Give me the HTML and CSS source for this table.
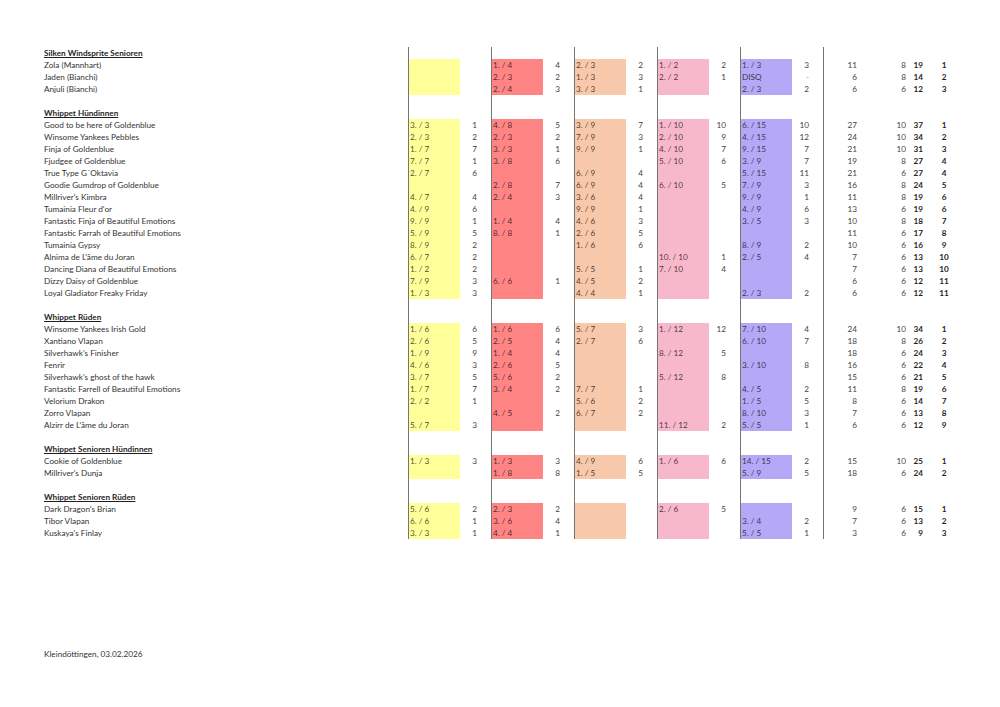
FILE: index.html
```html
<!DOCTYPE html>
<html lang="de">
<head>
<meta charset="utf-8">
<title>Rangliste</title>
<link rel="stylesheet" href="styles.css">
</head>
<body>
<div class="sheet">
  <div class="row head"><span class="nm"><u>Silken Windsprite Senioren</u></span><span class="c"></span><span class="n"></span><span class="c"></span><span class="n"></span><span class="c"></span><span class="n"></span><span class="c"></span><span class="n"></span><span class="c"></span><span class="n"></span><span class="t"></span><span class="b"></span><span class="s"></span><span class="k"></span></div>
  <div class="row"><span class="nm">Zola (Mannhart)</span><span class="c y"></span><span class="n"></span><span class="c r">1. / 4</span><span class="n">4</span><span class="c o">2. / 3</span><span class="n">2</span><span class="c p">1. / 2</span><span class="n">2</span><span class="c v">1. / 3</span><span class="n">3</span><span class="t">11</span><span class="b">8</span><span class="s">19</span><span class="k">1</span></div>
  <div class="row"><span class="nm">Jaden (Bianchi)</span><span class="c y"></span><span class="n"></span><span class="c r">2. / 3</span><span class="n">2</span><span class="c o">1. / 3</span><span class="n">3</span><span class="c p">2. / 2</span><span class="n">1</span><span class="c v">DISQ</span><span class="n dash">-</span><span class="t">6</span><span class="b">8</span><span class="s">14</span><span class="k">2</span></div>
  <div class="row"><span class="nm">Anjuli (Bianchi)</span><span class="c y"></span><span class="n"></span><span class="c r">2. / 4</span><span class="n">3</span><span class="c o">3. / 3</span><span class="n">1</span><span class="c p"></span><span class="n"></span><span class="c v">2. / 3</span><span class="n">2</span><span class="t">6</span><span class="b">6</span><span class="s">12</span><span class="k">3</span></div>
  <div class="row"><span class="nm"></span><span class="c"></span><span class="n"></span><span class="c"></span><span class="n"></span><span class="c"></span><span class="n"></span><span class="c"></span><span class="n"></span><span class="c"></span><span class="n"></span><span class="t"></span><span class="b"></span><span class="s"></span><span class="k"></span></div>

  <div class="row head"><span class="nm"><u>Whippet Hündinnen</u></span><span class="c"></span><span class="n"></span><span class="c"></span><span class="n"></span><span class="c"></span><span class="n"></span><span class="c"></span><span class="n"></span><span class="c"></span><span class="n"></span><span class="t"></span><span class="b"></span><span class="s"></span><span class="k"></span></div>
  <div class="row"><span class="nm">Good to be here of Goldenblue</span><span class="c y">3. / 3</span><span class="n">1</span><span class="c r">4. / 8</span><span class="n">5</span><span class="c o">3. / 9</span><span class="n">7</span><span class="c p">1. / 10</span><span class="n">10</span><span class="c v">6. / 15</span><span class="n">10</span><span class="t">27</span><span class="b">10</span><span class="s">37</span><span class="k">1</span></div>
  <div class="row"><span class="nm">Winsome Yankees Pebbles</span><span class="c y">2. / 3</span><span class="n">2</span><span class="c r">2. / 3</span><span class="n">2</span><span class="c o">7. / 9</span><span class="n">3</span><span class="c p">2. / 10</span><span class="n">9</span><span class="c v">4. / 15</span><span class="n">12</span><span class="t">24</span><span class="b">10</span><span class="s">34</span><span class="k">2</span></div>
  <div class="row"><span class="nm">Finja of Goldenblue</span><span class="c y">1. / 7</span><span class="n">7</span><span class="c r">3. / 3</span><span class="n">1</span><span class="c o">9. / 9</span><span class="n">1</span><span class="c p">4. / 10</span><span class="n">7</span><span class="c v">9. / 15</span><span class="n">7</span><span class="t">21</span><span class="b">10</span><span class="s">31</span><span class="k">3</span></div>
  <div class="row"><span class="nm">Fjudgee of Goldenblue</span><span class="c y">7. / 7</span><span class="n">1</span><span class="c r">3. / 8</span><span class="n">6</span><span class="c o"></span><span class="n"></span><span class="c p">5. / 10</span><span class="n">6</span><span class="c v">3. / 9</span><span class="n">7</span><span class="t">19</span><span class="b">8</span><span class="s">27</span><span class="k">4</span></div>
  <div class="row"><span class="nm">True Type G´Oktavia</span><span class="c y">2. / 7</span><span class="n">6</span><span class="c r"></span><span class="n"></span><span class="c o">6. / 9</span><span class="n">4</span><span class="c p"></span><span class="n"></span><span class="c v">5. / 15</span><span class="n">11</span><span class="t">21</span><span class="b">6</span><span class="s">27</span><span class="k">4</span></div>
  <div class="row"><span class="nm">Goodie Gumdrop of Goldenblue</span><span class="c y"></span><span class="n"></span><span class="c r">2. / 8</span><span class="n">7</span><span class="c o">6. / 9</span><span class="n">4</span><span class="c p">6. / 10</span><span class="n">5</span><span class="c v">7. / 9</span><span class="n">3</span><span class="t">16</span><span class="b">8</span><span class="s">24</span><span class="k">5</span></div>
  <div class="row"><span class="nm">Millriver's Kimbra</span><span class="c y">4. / 7</span><span class="n">4</span><span class="c r">2. / 4</span><span class="n">3</span><span class="c o">3. / 6</span><span class="n">4</span><span class="c p"></span><span class="n"></span><span class="c v">9. / 9</span><span class="n">1</span><span class="t">11</span><span class="b">8</span><span class="s">19</span><span class="k">6</span></div>
  <div class="row"><span class="nm">Tumainia Fleur d'or</span><span class="c y">4. / 9</span><span class="n">6</span><span class="c r"></span><span class="n"></span><span class="c o">9. / 9</span><span class="n">1</span><span class="c p"></span><span class="n"></span><span class="c v">4. / 9</span><span class="n">6</span><span class="t">13</span><span class="b">6</span><span class="s">19</span><span class="k">6</span></div>
  <div class="row"><span class="nm">Fantastic Finja of Beautiful Emotions</span><span class="c y">9. / 9</span><span class="n">1</span><span class="c r">1. / 4</span><span class="n">4</span><span class="c o">4. / 6</span><span class="n">3</span><span class="c p"></span><span class="n"></span><span class="c v">3. / 5</span><span class="n">3</span><span class="t">10</span><span class="b">8</span><span class="s">18</span><span class="k">7</span></div>
  <div class="row"><span class="nm">Fantastic Farrah of Beautiful Emotions</span><span class="c y">5. / 9</span><span class="n">5</span><span class="c r">8. / 8</span><span class="n">1</span><span class="c o">2. / 6</span><span class="n">5</span><span class="c p"></span><span class="n"></span><span class="c v"></span><span class="n"></span><span class="t">11</span><span class="b">6</span><span class="s">17</span><span class="k">8</span></div>
  <div class="row"><span class="nm">Tumainia Gypsy</span><span class="c y">8. / 9</span><span class="n">2</span><span class="c r"></span><span class="n"></span><span class="c o">1. / 6</span><span class="n">6</span><span class="c p"></span><span class="n"></span><span class="c v">8. / 9</span><span class="n">2</span><span class="t">10</span><span class="b">6</span><span class="s">16</span><span class="k">9</span></div>
  <div class="row"><span class="nm">Alnima de L'âme du Joran</span><span class="c y">6. / 7</span><span class="n">2</span><span class="c r"></span><span class="n"></span><span class="c o"></span><span class="n"></span><span class="c p">10. / 10</span><span class="n">1</span><span class="c v">2. / 5</span><span class="n">4</span><span class="t">7</span><span class="b">6</span><span class="s">13</span><span class="k">10</span></div>
  <div class="row"><span class="nm">Dancing Diana of Beautiful Emotions</span><span class="c y">1. / 2</span><span class="n">2</span><span class="c r"></span><span class="n"></span><span class="c o">5. / 5</span><span class="n">1</span><span class="c p">7. / 10</span><span class="n">4</span><span class="c v"></span><span class="n"></span><span class="t">7</span><span class="b">6</span><span class="s">13</span><span class="k">10</span></div>
  <div class="row"><span class="nm">Dizzy Daisy of Goldenblue</span><span class="c y">7. / 9</span><span class="n">3</span><span class="c r">6. / 6</span><span class="n">1</span><span class="c o">4. / 5</span><span class="n">2</span><span class="c p"></span><span class="n"></span><span class="c v"></span><span class="n"></span><span class="t">6</span><span class="b">6</span><span class="s">12</span><span class="k">11</span></div>
  <div class="row"><span class="nm">Loyal Gladiator Freaky Friday</span><span class="c y">1. / 3</span><span class="n">3</span><span class="c r"></span><span class="n"></span><span class="c o">4. / 4</span><span class="n">1</span><span class="c p"></span><span class="n"></span><span class="c v">2. / 3</span><span class="n">2</span><span class="t">6</span><span class="b">6</span><span class="s">12</span><span class="k">11</span></div>
  <div class="row"><span class="nm"></span><span class="c"></span><span class="n"></span><span class="c"></span><span class="n"></span><span class="c"></span><span class="n"></span><span class="c"></span><span class="n"></span><span class="c"></span><span class="n"></span><span class="t"></span><span class="b"></span><span class="s"></span><span class="k"></span></div>

  <div class="row head"><span class="nm"><u>Whippet Rüden</u></span><span class="c"></span><span class="n"></span><span class="c"></span><span class="n"></span><span class="c"></span><span class="n"></span><span class="c"></span><span class="n"></span><span class="c"></span><span class="n"></span><span class="t"></span><span class="b"></span><span class="s"></span><span class="k"></span></div>
  <div class="row"><span class="nm">Winsome Yankees Irish Gold</span><span class="c y">1. / 6</span><span class="n">6</span><span class="c r">1. / 6</span><span class="n">6</span><span class="c o">5. / 7</span><span class="n">3</span><span class="c p">1. / 12</span><span class="n">12</span><span class="c v">7. / 10</span><span class="n">4</span><span class="t">24</span><span class="b">10</span><span class="s">34</span><span class="k">1</span></div>
  <div class="row"><span class="nm">Xantiano Vlapan</span><span class="c y">2. / 6</span><span class="n">5</span><span class="c r">2. / 5</span><span class="n">4</span><span class="c o">2. / 7</span><span class="n">6</span><span class="c p"></span><span class="n"></span><span class="c v">6. / 10</span><span class="n">7</span><span class="t">18</span><span class="b">8</span><span class="s">26</span><span class="k">2</span></div>
  <div class="row"><span class="nm">Silverhawk's Finisher</span><span class="c y">1. / 9</span><span class="n">9</span><span class="c r">1. / 4</span><span class="n">4</span><span class="c o"></span><span class="n"></span><span class="c p">8. / 12</span><span class="n">5</span><span class="c v"></span><span class="n"></span><span class="t">18</span><span class="b">6</span><span class="s">24</span><span class="k">3</span></div>
  <div class="row"><span class="nm">Fenrir</span><span class="c y">4. / 6</span><span class="n">3</span><span class="c r">2. / 6</span><span class="n">5</span><span class="c o"></span><span class="n"></span><span class="c p"></span><span class="n"></span><span class="c v">3. / 10</span><span class="n">8</span><span class="t">16</span><span class="b">6</span><span class="s">22</span><span class="k">4</span></div>
  <div class="row"><span class="nm">Silverhawk's ghost of the hawk</span><span class="c y">3. / 7</span><span class="n">5</span><span class="c r">5. / 6</span><span class="n">2</span><span class="c o"></span><span class="n"></span><span class="c p">5. / 12</span><span class="n">8</span><span class="c v"></span><span class="n"></span><span class="t">15</span><span class="b">6</span><span class="s">21</span><span class="k">5</span></div>
  <div class="row"><span class="nm">Fantastic Farrell of Beautiful Emotions</span><span class="c y">1. / 7</span><span class="n">7</span><span class="c r">3. / 4</span><span class="n">2</span><span class="c o">7. / 7</span><span class="n">1</span><span class="c p"></span><span class="n"></span><span class="c v">4. / 5</span><span class="n">2</span><span class="t">11</span><span class="b">8</span><span class="s">19</span><span class="k">6</span></div>
  <div class="row"><span class="nm">Velorium Drakon</span><span class="c y">2. / 2</span><span class="n">1</span><span class="c r"></span><span class="n"></span><span class="c o">5. / 6</span><span class="n">2</span><span class="c p"></span><span class="n"></span><span class="c v">1. / 5</span><span class="n">5</span><span class="t">8</span><span class="b">6</span><span class="s">14</span><span class="k">7</span></div>
  <div class="row"><span class="nm">Zorro Vlapan</span><span class="c y"></span><span class="n"></span><span class="c r">4. / 5</span><span class="n">2</span><span class="c o">6. / 7</span><span class="n">2</span><span class="c p"></span><span class="n"></span><span class="c v">8. / 10</span><span class="n">3</span><span class="t">7</span><span class="b">6</span><span class="s">13</span><span class="k">8</span></div>
  <div class="row"><span class="nm">Alzirr de L'âme du Joran</span><span class="c y">5. / 7</span><span class="n">3</span><span class="c r"></span><span class="n"></span><span class="c o"></span><span class="n"></span><span class="c p">11. / 12</span><span class="n">2</span><span class="c v">5. / 5</span><span class="n">1</span><span class="t">6</span><span class="b">6</span><span class="s">12</span><span class="k">9</span></div>
  <div class="row"><span class="nm"></span><span class="c"></span><span class="n"></span><span class="c"></span><span class="n"></span><span class="c"></span><span class="n"></span><span class="c"></span><span class="n"></span><span class="c"></span><span class="n"></span><span class="t"></span><span class="b"></span><span class="s"></span><span class="k"></span></div>

  <div class="row head"><span class="nm"><u>Whippet Senioren Hündinnen</u></span><span class="c"></span><span class="n"></span><span class="c"></span><span class="n"></span><span class="c"></span><span class="n"></span><span class="c"></span><span class="n"></span><span class="c"></span><span class="n"></span><span class="t"></span><span class="b"></span><span class="s"></span><span class="k"></span></div>
  <div class="row"><span class="nm">Cookie of Goldenblue</span><span class="c y">1. / 3</span><span class="n">3</span><span class="c r">1. / 3</span><span class="n">3</span><span class="c o">4. / 9</span><span class="n">6</span><span class="c p">1. / 6</span><span class="n">6</span><span class="c v">14. / 15</span><span class="n">2</span><span class="t">15</span><span class="b">10</span><span class="s">25</span><span class="k">1</span></div>
  <div class="row"><span class="nm">Millriver's Dunja</span><span class="c y"></span><span class="n"></span><span class="c r">1. / 8</span><span class="n">8</span><span class="c o">1. / 5</span><span class="n">5</span><span class="c p"></span><span class="n"></span><span class="c v">5. / 9</span><span class="n">5</span><span class="t">18</span><span class="b">6</span><span class="s">24</span><span class="k">2</span></div>
  <div class="row"><span class="nm"></span><span class="c"></span><span class="n"></span><span class="c"></span><span class="n"></span><span class="c"></span><span class="n"></span><span class="c"></span><span class="n"></span><span class="c"></span><span class="n"></span><span class="t"></span><span class="b"></span><span class="s"></span><span class="k"></span></div>

  <div class="row head"><span class="nm"><u>Whippet Senioren Rüden</u></span><span class="c"></span><span class="n"></span><span class="c"></span><span class="n"></span><span class="c"></span><span class="n"></span><span class="c"></span><span class="n"></span><span class="c"></span><span class="n"></span><span class="t"></span><span class="b"></span><span class="s"></span><span class="k"></span></div>
  <div class="row"><span class="nm">Dark Dragon's Brian</span><span class="c y">5. / 6</span><span class="n">2</span><span class="c r">2. / 3</span><span class="n">2</span><span class="c o"></span><span class="n"></span><span class="c p">2. / 6</span><span class="n">5</span><span class="c v"></span><span class="n"></span><span class="t">9</span><span class="b">6</span><span class="s">15</span><span class="k">1</span></div>
  <div class="row"><span class="nm">Tibor Vlapan</span><span class="c y">6. / 6</span><span class="n">1</span><span class="c r">3. / 6</span><span class="n">4</span><span class="c o"></span><span class="n"></span><span class="c p"></span><span class="n"></span><span class="c v">3. / 4</span><span class="n">2</span><span class="t">7</span><span class="b">6</span><span class="s">13</span><span class="k">2</span></div>
  <div class="row"><span class="nm">Kuskaya's Finlay</span><span class="c y">3. / 3</span><span class="n">1</span><span class="c r">4. / 4</span><span class="n">1</span><span class="c o"></span><span class="n"></span><span class="c p"></span><span class="n"></span><span class="c v">5. / 5</span><span class="n">1</span><span class="t">3</span><span class="b">6</span><span class="s">9</span><span class="k">3</span></div>
</div>
<p class="footer">Kleindöttingen, 03.02.2026</p>
</body>
</html>
```

FILE: styles.css
```css
* { box-sizing: border-box; }

html, body {
  margin: 0;
  padding: 0;
  background: #ffffff;
}

body {
  font-family: Lato, "Open Sans", "Liberation Sans", sans-serif;
  font-size: 8.2px;
  color: #333333;
  padding: 47px 0 0 44px;
}

.sheet {
  display: flex;
  flex-direction: column;
}

.row {
  display: grid;
  grid-template-columns: 364px repeat(5, 52px 31px) 35px 48px 17px 42px;
  height: 12px;
  line-height: 12px;
}

.row > span {
  display: block;
  height: 12px;
  white-space: nowrap;
  overflow: hidden;
}

.head .nm {
  font-weight: 700;
  color: #1f1f1f;
}

.head u {
  text-decoration-thickness: 1px;
  text-underline-offset: 1px;
}

.c {
  border-left: 1px solid #747474;
  padding-left: 1px;
  color: rgba(0, 0, 0, 0.72);
}

.y { background: #ffff99; }
.r { background: #ff8585; }
.o { background: #f8c8aa; }
.p { background: #f8b8cc; }
.v { background: #b5a8f7; }

.n {
  text-align: right;
  padding-right: 14px;
  color: #444444;
}

.n.dash { color: #999999; }

.t {
  border-left: 1px solid #747474;
  text-align: right;
  padding-right: 1px;
  color: #444444;
}

.b {
  text-align: right;
  color: #444444;
}

.s {
  text-align: right;
  font-weight: 700;
  color: #1f1f1f;
}

.k {
  text-align: center;
  font-weight: 700;
  color: #1f1f1f;
}

.footer {
  margin: 109px 0 0 0;
  height: 12px;
  line-height: 12px;
  color: #333333;
}
```
